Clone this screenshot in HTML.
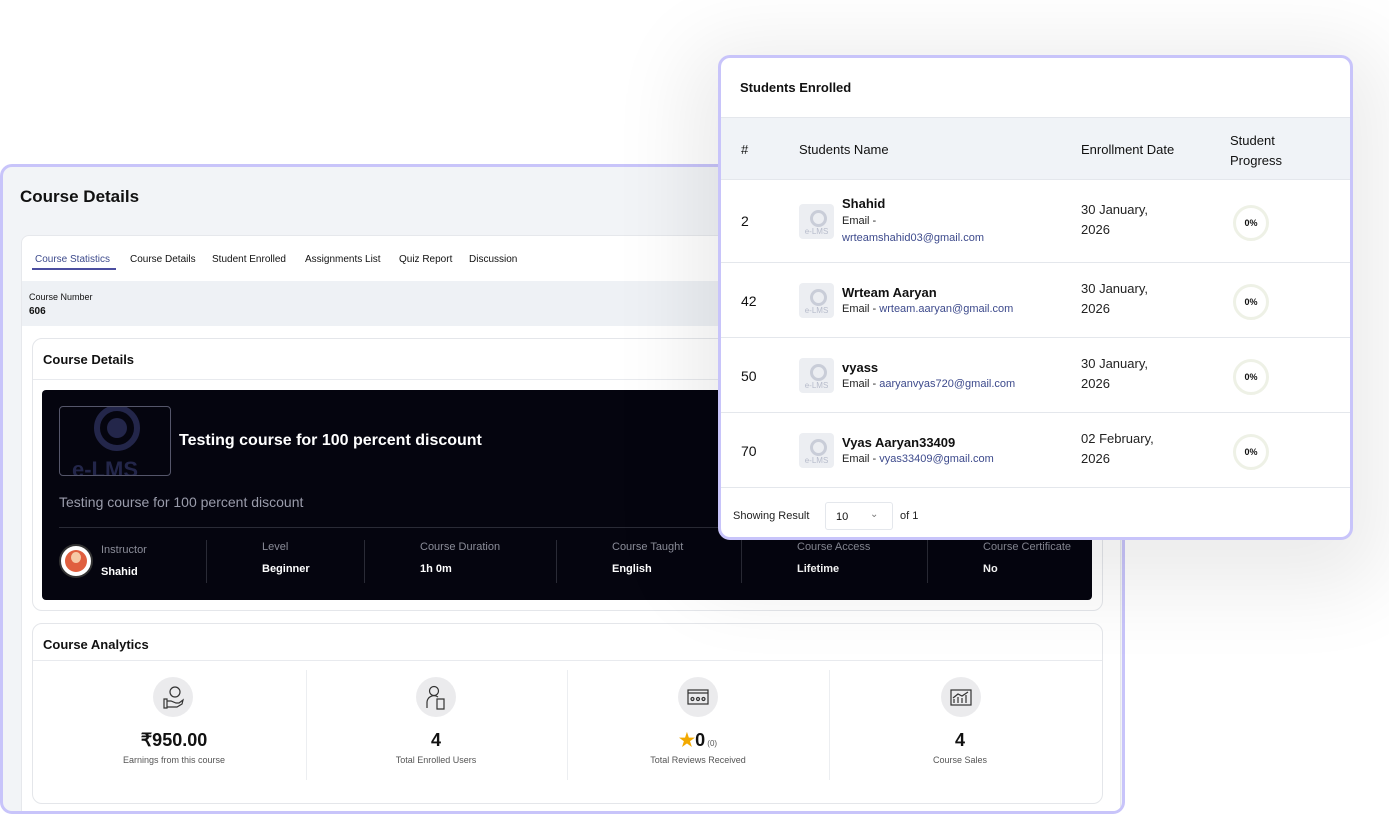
<!DOCTYPE html>
<html><head><meta charset="utf-8"><style>
*{box-sizing:border-box;margin:0;padding:0}
body{width:1389px;height:815px;background:#fff;position:relative;overflow:hidden;font-family:"Liberation Sans",sans-serif;color:#111}
.a{position:absolute}
#left{left:0;top:164px;width:1125px;height:650px;border:3px solid #c8c4fa;border-radius:12px;background:#f2f4f7;overflow:hidden}
#inner{left:18px;top:68px;width:1100px;height:590px;background:#fff;border:1px solid #e6e8ec;border-radius:8px}
.tab{position:absolute;top:18px;font-size:10px;color:#111}
.card{position:absolute;background:#fff;border:1px solid #e4e6ea;border-radius:10px}
.dk{position:absolute;left:42px;top:390px;width:1050px;height:210px;background:#05050f;border-radius:4px}
.lbl{position:absolute;font-size:11px;color:#8b8d99}
.val{position:absolute;font-size:11px;color:#fff;font-weight:bold}
.vd{position:absolute;top:540px;width:1px;height:43px;background:#2a2b36}
.ic{position:absolute;width:40px;height:40px;border-radius:50%;background:#ebebed;top:677px}
.big{position:absolute;top:730px;font-size:18px;font-weight:bold;text-align:center;width:260px}
.sm{position:absolute;top:755px;font-size:9px;color:#555;text-align:center;width:260px}
#right{left:718px;top:55px;width:635px;height:485px;border:3px solid #c8c4fa;border-radius:12px;background:#fff;box-shadow:0 20px 80px 30px rgba(0,0,0,0.08);overflow:hidden}
.th{position:absolute;font-size:13px;color:#111}
.row{position:absolute;left:0;width:632px;border-top:1px solid #e4e7ec}
.num{position:absolute;left:20px;font-size:14px}
.av{position:absolute;left:78px;width:35px;height:35px;background:#eceef2;border-radius:4px;font-size:8px;color:#b7bccb;text-align:center;padding-top:23px}
.av:before{content:"";position:absolute;left:11px;top:6px;width:11px;height:11px;border:3px solid #c9cdd8;border-radius:50%}
.nm{position:absolute;left:121px;font-size:13px;font-weight:bold}
.em{position:absolute;left:121px;font-size:11px;color:#222;line-height:17px}
.em span{color:#3d4a8c}
.dt{position:absolute;left:360px;font-size:13px;line-height:20px;color:#222}
.pg{position:absolute;left:512px;width:36px;height:36px;border:3px solid #eef1e6;border-radius:50%;font-size:9px;font-weight:bold;text-align:center;line-height:30px}
</style></head><body>
<div id="left" class="a">
<div class="a" style="left:17px;top:20px;font-size:17px;font-weight:bold">Course Details</div>
<div id="inner" class="a">
<div class="tab" style="left:13px;color:#3d4a8c">Course Statistics</div>
<div class="a" style="left:10px;top:32px;width:84px;height:2px;background:#4b4ea0"></div>
<div class="tab" style="left:108px">Course Details</div>
<div class="tab" style="left:190px">Student Enrolled</div>
<div class="tab" style="left:283px">Assignments List</div>
<div class="tab" style="left:377px">Quiz Report</div>
<div class="tab" style="left:447px">Discussion</div>
<div class="a" style="left:0;top:45px;width:1100px;height:45px;background:#eef1f5"></div>
<div class="a" style="left:7px;top:56px;font-size:9px">Course Number</div>
<div class="a" style="left:7px;top:70px;font-size:10px;font-weight:bold">606</div>
</div>
</div>
<div class="card" style="left:32px;top:338px;width:1071px;height:273px">
<div class="a" style="left:10px;top:13px;font-size:13px;font-weight:bold">Course Details</div>
<div class="a" style="left:0;top:40px;width:1069px;height:1px;background:#e8eaee"></div>
</div>
<div class="dk">
<div class="a" style="left:17px;top:16px;width:112px;height:70px;border:1px solid #55566a;border-radius:4px;overflow:hidden">
<div class="a" style="left:34px;top:-2px;width:46px;height:46px;border:6px solid #23264a;border-radius:50%"></div>
<div class="a" style="left:47px;top:11px;width:20px;height:20px;background:#23264a;border-radius:50%"></div>
<div class="a" style="left:12px;top:50px;font-size:22px;font-weight:bold;color:#23264a">e-LMS</div>
</div>
<div class="a" style="left:137px;top:42px;font-size:16px;font-weight:bold;color:#fff">Testing course for 100 percent discount</div>
<div class="a" style="left:17px;top:104px;font-size:14px;color:#9a9cab">Testing course for 100 percent discount</div>
<div class="a" style="left:17px;top:137px;width:1033px;height:1px;background:#2a2b36"></div>
</div>
<div class="a" style="left:59px;top:544px;width:34px;height:34px;border-radius:50%;background:#fff;border:2px solid #333"><div class="a" style="left:4px;top:4px;width:22px;height:22px;border-radius:50%;background:#e05f3f"></div><div class="a" style="left:10px;top:6px;width:10px;height:11px;border-radius:50%;background:#f6c9a6"></div></div>
<div class="lbl" style="left:101px;top:544px">Instructor</div><div class="val" style="left:101px;top:566px">Shahid</div>
<div class="vd" style="left:206px"></div>
<div class="lbl" style="left:262px;top:541px">Level</div><div class="val" style="left:262px;top:563px">Beginner</div>
<div class="vd" style="left:364px"></div>
<div class="lbl" style="left:420px;top:541px">Course Duration</div><div class="val" style="left:420px;top:563px">1h 0m</div>
<div class="vd" style="left:556px"></div>
<div class="lbl" style="left:612px;top:541px">Course Taught</div><div class="val" style="left:612px;top:563px">English</div>
<div class="vd" style="left:741px"></div>
<div class="lbl" style="left:797px;top:541px">Course Access</div><div class="val" style="left:797px;top:563px">Lifetime</div>
<div class="vd" style="left:927px"></div>
<div class="lbl" style="left:983px;top:541px">Course Certificate</div><div class="val" style="left:983px;top:563px">No</div>

<div class="card" style="left:32px;top:623px;width:1071px;height:181px">
<div class="a" style="left:10px;top:13px;font-size:13px;font-weight:bold">Course Analytics</div>
<div class="a" style="left:0;top:36px;width:1069px;height:1px;background:#e8eaee"></div>
<div class="a" style="left:273px;top:46px;width:1px;height:110px;background:#eceef1"></div>
<div class="a" style="left:534px;top:46px;width:1px;height:110px;background:#eceef1"></div>
<div class="a" style="left:796px;top:46px;width:1px;height:110px;background:#eceef1"></div>
</div>
<div class="ic" style="left:153px"><svg width="40" height="40" viewBox="0 0 40 40" fill="none" stroke="#333" stroke-width="1.2"><circle cx="22" cy="15" r="5"/><path d="M11 22h3v9h-3zM14 24h4l5 2h3l4-3-1 4-5 3h-10"/></svg></div>
<div class="ic" style="left:416px"><svg width="40" height="40" viewBox="0 0 40 40" fill="none" stroke="#333" stroke-width="1.2"><circle cx="18" cy="14" r="4.5"/><path d="M11 31v-6a7 7 0 0 1 11-5M21 22h7v10h-7z"/></svg></div>
<div class="ic" style="left:678px"><svg width="40" height="40" viewBox="0 0 40 40" fill="none" stroke="#333" stroke-width="1.2"><rect x="10" y="13" width="20" height="14"/><path d="M10 16h20"/><circle cx="14.5" cy="22" r="1.5"/><circle cx="20" cy="22" r="1.5"/><circle cx="25.5" cy="22" r="1.5"/></svg></div>
<div class="ic" style="left:941px"><svg width="40" height="40" viewBox="0 0 40 40" fill="none" stroke="#333" stroke-width="1.2"><rect x="10" y="13" width="20" height="15"/><path d="M13 26v-4M17 26v-6M21 26v-5M25 26v-8M12 21l5-4 4 2 6-4"/></svg></div>
<div class="big" style="left:44px">₹950.00</div><div class="sm" style="left:44px">Earnings from this course</div>
<div class="big" style="left:306px">4</div><div class="sm" style="left:306px">Total Enrolled Users</div>
<div class="big" style="left:568px"><span style="color:#f2a900">★</span>0<span style="font-size:8px;font-weight:normal;color:#555"> (0)</span></div><div class="sm" style="left:568px">Total Reviews Received</div>
<div class="big" style="left:830px">4</div><div class="sm" style="left:830px">Course Sales</div>

<div id="right" class="a">
<div class="a" style="left:19px;top:22px;font-size:13px;font-weight:bold">Students Enrolled</div>
<div class="a" style="left:0;top:59px;width:632px;height:63px;background:#f0f3f7;border-top:1px solid #e4e7ec"></div>
<div class="th" style="left:20px;top:84px">#</div>
<div class="th" style="left:78px;top:84px">Students Name</div>
<div class="th" style="left:360px;top:84px">Enrollment Date</div>
<div class="th" style="left:509px;top:73px;line-height:20px">Student<br>Progress</div>

<div class="row" style="top:121px;height:83px">
<div class="num" style="top:33px">2</div><div class="av" style="top:24px">e-LMS</div>
<div class="nm" style="top:16px">Shahid</div><div class="em" style="top:33px">Email -<br><span>wrteamshahid03@gmail.com</span></div>
<div class="dt" style="top:20px">30 January,<br>2026</div><div class="pg" style="top:25px">0%</div></div>
<div class="row" style="top:204px;height:75px">
<div class="num" style="top:30px">42</div><div class="av" style="top:20px">e-LMS</div>
<div class="nm" style="top:22px">Wrteam Aaryan</div><div class="em" style="top:38px">Email - <span>wrteam.aaryan@gmail.com</span></div>
<div class="dt" style="top:16px">30 January,<br>2026</div><div class="pg" style="top:21px">0%</div></div>
<div class="row" style="top:279px;height:75px">
<div class="num" style="top:30px">50</div><div class="av" style="top:20px">e-LMS</div>
<div class="nm" style="top:22px">vyass</div><div class="em" style="top:38px">Email - <span>aaryanvyas720@gmail.com</span></div>
<div class="dt" style="top:16px">30 January,<br>2026</div><div class="pg" style="top:21px">0%</div></div>
<div class="row" style="top:354px;height:75px">
<div class="num" style="top:30px">70</div><div class="av" style="top:20px">e-LMS</div>
<div class="nm" style="top:22px">Vyas Aaryan33409</div><div class="em" style="top:38px">Email - <span>vyas33409@gmail.com</span></div>
<div class="dt" style="top:16px">02 February,<br>2026</div><div class="pg" style="top:21px">0%</div></div>
<div class="row" style="top:429px;height:60px"></div>
<div class="a" style="left:12px;top:452px;font-size:11px;color:#222">Showing Result</div>
<div class="a" style="left:104px;top:444px;width:68px;height:28px;border:1px solid #e4e7ec;border-radius:3px;font-size:11px;padding:8px 0 0 10px">10<span style="position:absolute;left:44px;top:6px;font-size:10px;color:#777">⌄</span></div>
<div class="a" style="left:179px;top:452px;font-size:11px;color:#222">of 1</div>
</div>
</body></html>
